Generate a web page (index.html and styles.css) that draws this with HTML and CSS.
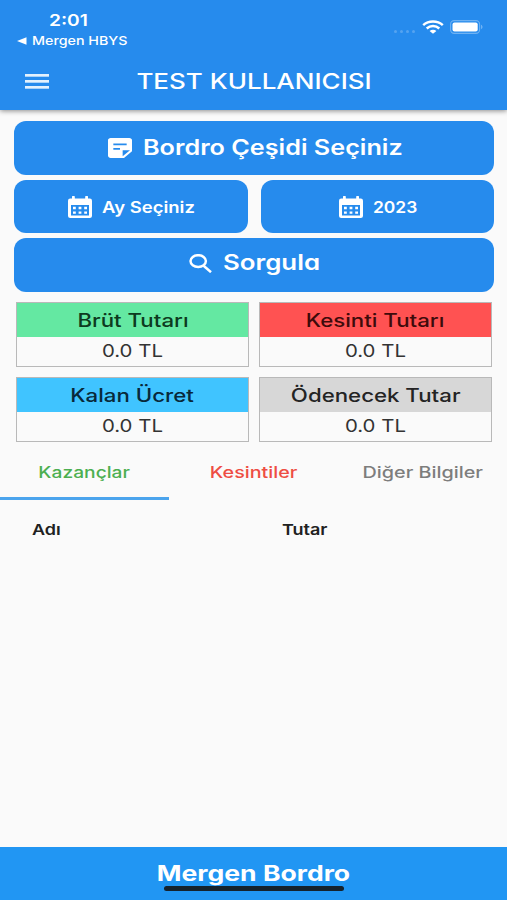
FILE: index.html
```html
<!DOCTYPE html>
<html lang="tr">
<head>
<meta charset="utf-8">
<meta name="viewport" content="width=device-width, initial-scale=1">
<title>Mergen Bordro</title>
<link rel="stylesheet" href="styles.css">
</head>
<body>
<div class="app">
  <header class="appbar">
    <div class="status">
      <div class="status-left">
        <span class="t clock">2:01</span>
        <div class="back">
          <svg class="back-arrow" viewBox="0 0 10 8"><path d="M0 4 9.5 .3v7.4z" fill="currentColor"/></svg>
          <span class="t back-label">Mergen HBYS</span>
        </div>
      </div>
      <div class="status-right">
        <span class="dots"><i></i><i></i><i></i><i></i></span>
        <svg class="wifi" viewBox="0 0 22 14" preserveAspectRatio="none" fill="none" stroke="#fff" stroke-width="2.5">
          <path d="M1.2 5.1C6.6.3 15.4.3 20.8 5.1M4.7 8.5c3.6-3.2 9-3.2 12.6 0"/>
          <path d="M11 13.8 7.6 10.9c1.9-1.6 4.9-1.6 6.8 0z" fill="#fff" stroke="none"/>
        </svg>
        <svg class="battery" viewBox="0 0 34 14">
          <rect x=".6" y=".6" width="29" height="12.8" rx="3.6" fill="none" stroke="#6fb2f3" stroke-width="1.1"/>
          <rect x="2.5" y="2.5" width="25.2" height="9" rx="2" fill="#fff"/>
          <path d="M31 4.8c2 .7 2 3.7 0 4.4z" fill="#6fb2f3"/>
        </svg>
      </div>
    </div>
    <div class="toolbar">
      <span class="menu"><i></i><i></i><i></i></span>
      <h1 class="t title">TEST KULLANICISI</h1>
    </div>
  </header>

  <main>
    <section class="actions">
      <button class="btn wide">
        <svg class="icon note" viewBox="3 3 18 18" preserveAspectRatio="none"><path fill="#fff" fill-rule="evenodd" d="M19 3H4.990C3.890 3 3 3.900 3 5l.010 14c0 1.100.890 2 1.990 2h10l6-6V5c0-1.100-.900-2-2-2zM7 8h10v1.500H7zm5 5.500H7V12h5zm2 6V14h5.500z"/></svg>
        <span class="t big pick">Bordro Çeşidi Seçiniz</span>
      </button>
      <div class="pair">
        <button class="btn">
          <svg class="icon cal" viewBox="0 0 24 22" preserveAspectRatio="none"><path fill="#fff" fill-rule="evenodd" d="M4 2.500V1a1.200 1.200 0 0 1 2.800 0v1.500h10.400V1a1.200 1.200 0 0 1 2.800 0v1.500h1.800A2.200 2.200 0 0 1 24 4.700v15A2.200 2.200 0 0 1 21.800 22H2.200A2.200 2.200 0 0 1 0 19.700v-15a2.200 2.200 0 0 1 2.200-2.200zM3 9v10.400h18V9zm2 1.800h2.800v2.400H5zm5.600 0h2.800v2.400h-2.800zm5.600 0H19v2.400h-2.800zM5 15.400h2.800v2.400H5zm5.600 0h2.800v2.400h-2.800zm5.600 0H19v2.400h-2.800z"/></svg>
          <span class="t small month">Ay Seçiniz</span>
        </button>
        <button class="btn">
          <svg class="icon cal" viewBox="0 0 24 22" preserveAspectRatio="none"><path fill="#fff" fill-rule="evenodd" d="M4 2.500V1a1.200 1.200 0 0 1 2.800 0v1.500h10.400V1a1.200 1.200 0 0 1 2.800 0v1.500h1.800A2.200 2.200 0 0 1 24 4.700v15A2.200 2.200 0 0 1 21.800 22H2.200A2.200 2.200 0 0 1 0 19.700v-15a2.200 2.200 0 0 1 2.200-2.200zM3 9v10.400h18V9zm2 1.800h2.800v2.400H5zm5.600 0h2.800v2.400h-2.800zm5.600 0H19v2.400h-2.800zM5 15.400h2.800v2.400H5zm5.600 0h2.800v2.400h-2.800zm5.600 0H19v2.400h-2.800z"/></svg>
          <span class="t small year">2023</span>
        </button>
      </div>
      <button class="btn wide query-btn">
        <svg class="icon search" viewBox="0 0 23 19" fill="none" stroke="#fff" stroke-width="2.5"><ellipse cx="9.2" cy="7.1" rx="7.7" ry="5.9"/><path d="m14.300 11.500 7.700 6.700"/></svg>
        <span class="t big query">Sorgula</span>
      </button>
    </section>

    <section class="cards">
      <article class="card green"><h2><span class="t gross">Brüt Tutarı</span></h2><p><span class="t amount">0.0 TL</span></p></article>
      <article class="card red"><h2><span class="t cut">Kesinti Tutarı</span></h2><p><span class="t amount">0.0 TL</span></p></article>
      <article class="card blue"><h2><span class="t net">Kalan Ücret</span></h2><p><span class="t amount">0.0 TL</span></p></article>
      <article class="card gray"><h2><span class="t due">Ödenecek Tutar</span></h2><p><span class="t amount">0.0 TL</span></p></article>
    </section>

    <nav class="tabs">
      <a class="tab earn active"><span class="t">Kazançlar</span></a>
      <a class="tab deduct"><span class="t">Kesintiler</span></a>
      <a class="tab other"><span class="t">Diğer Bilgiler</span></a>
    </nav>

    <div class="table-head">
      <span class="t name">Adı</span>
      <span class="t sum">Tutar</span>
    </div>
  </main>

  <footer class="footer">
    <span class="t brand">Mergen Bordro</span>
    <span class="home"></span>
  </footer>
</div>
</body>
</html>
```
FILE: styles.css
```css
* { box-sizing: border-box; margin: 0; padding: 0; }

body {
  width: 507px;
  height: 900px;
  overflow: hidden;
  background: #fafafa;
  font-family: Inter, "Liberation Sans", sans-serif;
  color: #212121;
}

.app { display: flex; flex-direction: column; height: 900px; }
main { flex: 1; }

/* Wide lettering used throughout */
.t {
  display: inline-block;
  white-space: nowrap;
  transform: scaleX(var(--sx, 1.2));
}

.appbar {
  height: 110px;
  background: #268bed;
  color: #fff;
  box-shadow: 0 1px 5px rgba(0, 0, 0, .45);
}

.status { display: flex; justify-content: space-between; height: 52px; }
.status-left { padding: 10px 0 0 17px; }
.status-left .t { transform-origin: left center; }
.clock { display: block; margin-left: 31.5px; font-size: 16px; line-height: 20px; font-weight: 600; }
.back { display: flex; align-items: center; margin-top: 3px; height: 16px; }
.back-arrow { width: 10px; height: 8px; margin-right: 5px; }
.back-label { font-size: 12px; line-height: 16px; font-weight: 500; --sx: 1.19; }

.status-right { display: flex; align-items: flex-start; padding: 20px 23px 0 0; }
.dots { display: flex; gap: 3px; margin: 10px 7px 0 0; }
.dots i { width: 3px; height: 3px; border-radius: 50%; background: #55a3f0; }
.wifi { width: 22px; height: 14px; margin-right: 6px; }
.battery { width: 34px; height: 14px; }

.toolbar { display: flex; align-items: center; height: 58px; padding-left: 25px; }
.menu { display: grid; gap: 3px; width: 24px; }
.menu i { height: 3px; border-bottom: 1px solid #a8d2f9; background: #e3f1fd; }
.title { width: 410px; text-align: center; font-size: 21.5px; line-height: 26px; font-weight: 500; --sx: 1.21; }

.actions { display: grid; gap: 5px; padding: 11px 13px 0 14px; }
.pair { display: grid; grid-template-columns: 1fr 1fr; gap: 13px; }
.btn {
  display: flex;
  align-items: center;
  justify-content: center;
  height: 53.5px;
  border: 0;
  border-radius: 12px;
  background: #268bed;
  color: #fff;
  font-family: inherit;
  font-weight: 600;
  font-feature-settings: "cv11";
}
.btn .t { text-align: left; transform-origin: left center; }
.icon { flex: none; }
.note { width: 24px; height: 20px; margin-right: 11px; }
.cal { width: 24px; height: 22px; margin-right: 10px; }
.search { width: 23px; height: 19px; margin-right: 11px; }
.big { font-size: 21px; line-height: 28px; }
.small { font-size: 16px; line-height: 22px; }
.pick { width: 257px; --sx: 1.2; }
.month { width: 91px; --sx: 1.155; }
.year { width: 43px; --sx: 1.09; }
.query { width: 96px; --sx: 1.23; }
.wide:first-child, .pair .btn { padding-top: 1px; }
.query-btn { padding-bottom: 3px; }

.cards {
  display: grid;
  grid-template-columns: 1fr 1fr;
  gap: 10px;
  padding: 10px 15px 0 16px;
}
.card { height: 65px; border: 1px solid #b9b9b9; text-align: center; }
.card h2 { height: 34px; font-size: 18px; line-height: 35px; font-weight: 500; --sx: 1.235; }
.card p { font-size: 17px; line-height: 29px; color: #333; }
.green h2 { background: #64e8a2; color: #0d3a20; }
.red h2 { background: #ff5252; color: #3e0b0b; }
.blue h2 { background: #40c4ff; color: #08293a; }
.gray h2 { background: #d7d7d7; color: #242424; }

.tabs { display: grid; grid-template-columns: repeat(3, 1fr); height: 58px; }
.tab {
  display: flex;
  align-items: center;
  justify-content: center;
  padding-top: 6px;
  border-bottom: 3px solid transparent;
  font-size: 16px;
  font-weight: 500;
}
.active { border-color: #4ba4ed; }
.earn { color: #4caf50; }
.deduct { color: #ee4d43; --sx: 1.23; }
.other { color: #7d7d7d; --sx: 1.235; }

.table-head { display: flex; padding: 20px 0 0 32px; font-size: 15px; line-height: 20px; font-weight: 600; }
.table-head .t { transform-origin: left center; }
.name { width: 250px; }

.footer {
  display: flex;
  flex-direction: column;
  align-items: center;
  height: 53px;
  padding-top: 14px;
  background: #2196f3;
  color: #fff;
}
.brand { font-size: 21px; line-height: 25px; font-weight: 700; --sx: 1.265; }
.home { width: 180px; height: 5px; border-radius: 3px; background: #15222c; }
```
